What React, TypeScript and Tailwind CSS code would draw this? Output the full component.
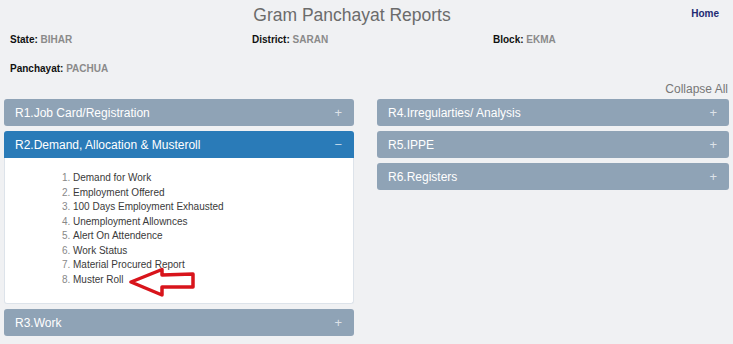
import React from "react";

const reports1 = [
    "Demand for Work",
    "Employment Offered",
    "100 Days Employment Exhausted",
    "Unemployment Allownces",
    "Alert On Attendence",
    "Work Status",
    "Material Procured Report",
    "Muster Roll",
];

const PanelHead = ({ title, open }: { title: string, open?: boolean }) => (
    <div
        className={
            open
                ? "h-[27px] flex items-center justify-between pl-[11px] pr-[12px] rounded-t-[3px] bg-[#2a7bb8] text-white text-[12px]"
                : "h-[27px] flex items-center justify-between pl-[11px] pr-[12px] rounded-[3px] bg-[#8fa3b6] text-white text-[12px]"
        }
    >
        <span>{title}</span>
        <span className="text-[13px] text-white/70">{open ? "−" : "+"}</span>
    </div>
);

const Arrow = () => (
    <svg width="68" height="31" viewBox="0 0 68 31" className="absolute left-[56px] top-[-6px]">
        <path
            d="M2 15 L33 2.5 L33 8 L64 7 L64 20 L33 20 L33 28 Z"
            fill="white"
            stroke="#d8141b"
            strokeWidth="3.5"
            strokeLinejoin="round"
        />
    </svg>
);

export default function App() {
    return (
        <div className="w-[733px] h-[344px] bg-[#f0f1f3] overflow-hidden text-[#333]" style={{ fontFamily: '"Liberation Sans", Arial, sans-serif' }}>
            <div className="relative h-[30px] flex items-center justify-center pr-[29px]">
                <h1 className="text-[17.5px] text-[#6b6b6b] pt-[1px]">Gram Panchayat Reports</h1>
                <a className="absolute right-[14px] top-[6px] text-[10px] font-bold text-[#232a72]">Home</a>
            </div>

            <div className="grid grid-cols-[242px_241px_1fr] pl-[10px] text-[10px] font-bold mt-[2px] h-[14px] items-center">
                <div className="text-[#111]">State: <span className="text-[#8a8a8a]">BIHAR</span></div>
                <div className="text-[#111]">District: <span className="text-[#8a8a8a]">SARAN</span></div>
                <div className="text-[#111]">Block: <span className="text-[#8a8a8a]">EKMA</span></div>
            </div>

            <div className="pl-[10px] text-[10px] font-bold mt-[15px] h-[14px] flex items-center text-[#111]">
                Panchayat:&nbsp;<span className="text-[#8a8a8a]">PACHUA</span>
            </div>

            <div className="flex justify-end pr-[5px] mt-[7px] h-[14px] items-center text-[12px] text-[#777]">
                Collapse All
            </div>

            <div className="grid grid-cols-[350px_352px] gap-[23px] pl-[4px] mt-[3px]">
                <div className="flex flex-col gap-[5px]">
                    <PanelHead title="R1.Job Card/Registration" />
                    <div>
                        <PanelHead title="R2.Demand, Allocation & Musteroll" open />
                        <div className="bg-white border border-[#dde3ea] border-t-0 rounded-b-[3px] h-[146px] pt-[13px]">
                            <ol className="list-decimal pl-[68px] text-[10px] leading-[14.5px] text-[#3a3a3a] marker:text-[#888]">
                                {reports1.map((r, i) => (
                                    <li key={r} className="relative">
                                        {r}
                                        {i === reports1.length - 1 && <Arrow />}
                                    </li>
                                ))}
                            </ol>
                        </div>
                    </div>
                    <PanelHead title="R3.Work" />
                </div>
                <div className="flex flex-col gap-[5px]">
                    <PanelHead title="R4.Irregularties/ Analysis" />
                    <PanelHead title="R5.IPPE" />
                    <PanelHead title="R6.Registers" />
                </div>
            </div>
        </div>
    );
}
